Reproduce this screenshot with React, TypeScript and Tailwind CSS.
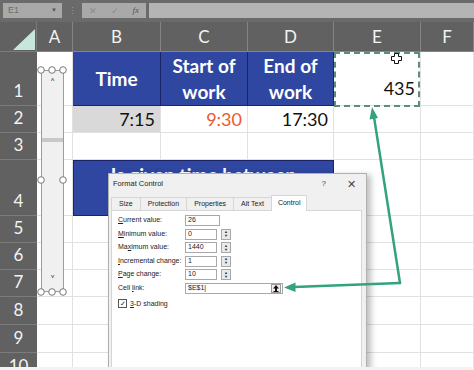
import React from "react";

const cols = ["A", "B", "C", "D", "E", "F"];
const blank = "bg-white border-r border-b border-[#e1e1e1]";
const blue =
  "bg-[#2f47a1] border-r border-b border-[#1a2466] text-white font-bold text-[19px] leading-[26px] flex items-center justify-center text-center";

const RowHead = ({ n }: { n: number }) => (
  <div className="bg-[#616161] border-b border-[#7c7c7c] flex items-end justify-center pb-[4px] text-[17px] leading-[20px] text-[#f3f3f3]">
    {n}
  </div>
);

const Spinner = () => (
  <div className="w-[10px] h-[11px] border border-[#a8a8a8] bg-[#e9e9e9] flex flex-col items-center justify-center text-[4px] leading-[4px] text-[#333]">
    <span>▲</span>
    <span>▼</span>
  </div>
);

const fields = [
  { label: <><span className="underline">C</span>urrent value:</>, value: "26", spin: false },
  { label: <><span className="underline">M</span>inimum value:</>, value: "0", spin: true },
  { label: <>Ma<span className="underline">x</span>imum value:</>, value: "1440", spin: true },
  { label: <><span className="underline">I</span>ncremental change:</>, value: "1", spin: true },
  { label: <><span className="underline">P</span>age change:</>, value: "10", spin: true },
];

const FormatControl = () => (
  <div className="absolute left-[108px] top-[173px] w-[259px] h-[200px] bg-[#f0f0f0] border border-[#b0b0b0] shadow-[4px_2px_6px_rgba(0,0,0,0.25)] font-['Liberation_Sans',sans-serif] text-[#222]">
    <div className="h-[20px] flex items-center pl-[4px] pr-[10px] text-[7.5px]">
      <span className="flex-1">Format Control</span>
      <span className="text-[8px] text-[#444] mr-[21px]">?</span>
      <span className="text-[11px] leading-none text-[#444] font-light">✕</span>
    </div>
    <div className="flex items-end h-[16px] pl-[2px] text-[7px]">
      {["Size", "Protection", "Properties", "Alt Text"].map((t) => (
        <div
          key={t}
          className="h-[13px] px-[7px] flex items-center border border-b-0 border-[#d6d6d6] -mr-px bg-[#f0f0f0]"
        >
          {t}
        </div>
      ))}
      <div className="h-[16px] px-[6px] flex items-center border border-b-0 border-[#d6d6d6] bg-white relative top-px">
        Control
      </div>
    </div>
    <div className="ml-[2px] mr-[4px] h-[170px] bg-white border border-[#d6d6d6] pl-[6px] pt-[4px] text-[7px]">
      <div className="flex flex-col gap-[2.5px]">
        {fields.map((f, i) => (
          <div key={i} className="flex items-center h-[11px]">
            <div className="w-[67px]">{f.label}</div>
            <div
              className={`${f.spin ? "w-[32px]" : "w-[35px]"} h-[11px] border border-[#a8a8a8] bg-white pl-[2px] flex items-center`}
            >
              {f.value}
            </div>
            {f.spin && (
              <div className="ml-[4px]">
                <Spinner />
              </div>
            )}
          </div>
        ))}
        <div className="flex items-center h-[11px]">
          <div className="w-[67px]">
            Cell <span className="underline">l</span>ink:
          </div>
          <div className="w-[98px] h-[11px] border border-[#a8a8a8] bg-white pl-[2px] flex items-center">
            <span className="flex-1">$E$1|</span>
            <div className="w-[10px] h-[9px] border border-[#9a9a9a] bg-[#eeeeee] flex items-center justify-center mr-px">
              <svg width="6" height="7" viewBox="0 0 6 7">
                <path d="M3 0L6 3.5H4V6H2V3.5H0Z" fill="#111" />
                <rect x="0.5" y="6" width="5" height="1" fill="#111" />
              </svg>
            </div>
          </div>
        </div>
      </div>
      <div className="flex items-center mt-[5px] gap-[3px]">
        <div className="w-[9px] h-[9px] border border-[#555] flex items-center justify-center text-[7px] leading-none">
          ✓
        </div>
        <span>
          <span className="underline">3</span>-D shading
        </span>
      </div>
    </div>
  </div>
);

const ScrollControl = () => (
  <>
    <div className="absolute left-[41px] top-[70px] w-[23px] h-[222px] border border-[#9c9c9c] bg-[#f0f0f0] flex flex-col items-center">
      <span className="mt-[6px] text-[9px] leading-none text-[#444]">˄</span>
      <div className="mt-[52px] w-full h-[4px] bg-[#c8c8c8]" />
      <div className="flex-1" />
      <span className="mb-[8px] text-[9px] leading-none text-[#444]">˅</span>
    </div>
    <svg className="absolute left-0 top-0 pointer-events-none" width="474" height="370">
      {[
        [41, 70], [52, 70], [63, 70],
        [41, 180], [63, 180],
        [41, 292], [52, 292], [63, 292],
      ].map(([x, y], i) => (
        <circle key={i} cx={x} cy={y} r="3.3" fill="white" stroke="#777" strokeWidth="1" />
      ))}
    </svg>
  </>
);

export default function App() {
  const rows = [1, 2, 3, 4, 5, 6, 7, 8, 9, 10];
  return (
    <div className="relative w-[474px] h-[370px] overflow-hidden bg-white font-['Lato',sans-serif]">
      {/* formula bar */}
      <div className="h-[22px] bg-[#6a6a6a] flex items-start pt-[3px] pl-[3px]">
        <div className="w-[59px] h-[15px] bg-[#a9a9a9] flex items-center px-[5px] text-[9px] text-[#6f6f6f] font-['Liberation_Sans',sans-serif]">
          <span className="flex-1">E1</span>
          <span className="text-[6px] text-[#555]">▼</span>
        </div>
        <div className="w-[20px] h-[15px] flex items-center justify-center text-[9px] text-[#9a9a9a]">⋮</div>
        <div className="w-[64px] h-[15px] bg-[#a9a9a9] flex items-center justify-around text-[9px] text-[#8a8a8a]">
          <span>✕</span>
          <span>✓</span>
          <span className="italic font-['Liberation_Serif',serif] text-[#555]">fx</span>
        </div>
        <div className="flex-1 h-[15px] ml-[3px] bg-[#b4b4b4]" />
      </div>

      {/* sheet */}
      <div className="grid grid-cols-[37px_36px_88px_87px_86px_87px_53px] grid-rows-[30px_54px_27px_27px_56px_27px_27px_27px_28px_28px_28px]">
        <div className="bg-[#616161] border-b border-r border-[#7c7c7c] relative">
          <svg className="absolute left-[13px] top-[7px]" width="22" height="21">
            <polygon points="22,0 22,21 0,21" fill="#c7e7dd" />
          </svg>
        </div>
        {cols.map((c) => (
          <div
            key={c}
            className="bg-[#616161] border-r border-b border-[#858585] flex items-center justify-center text-[17px] text-[#f3f3f3]"
          >
            {c}
          </div>
        ))}

        {rows.map((n) => {
          if (n === 1)
            return (
              <React.Fragment key={n}>
                <RowHead n={n} />
                <div className={blank} />
                <div className={blue}>Time</div>
                <div className={blue}>
                  Start of
                  <br />
                  work
                </div>
                <div className={blue}>
                  End of
                  <br />
                  work
                </div>
                <div className={`${blank} flex items-end justify-end pr-[5px] pb-[3px] text-[18px] text-[#111]`}>
                  435
                </div>
                <div className={blank} />
              </React.Fragment>
            );
          if (n === 2)
            return (
              <React.Fragment key={n}>
                <RowHead n={n} />
                <div className={blank} />
                <div className="bg-[#d9d9d9] border-r border-b border-[#e1e1e1] flex items-center justify-end pr-[5px] text-[18px] text-[#111]">
                  7:15
                </div>
                <div className={`${blank} flex items-center justify-end pr-[5px] text-[18px] text-[#ea5a2c]`}>
                  9:30
                </div>
                <div className={`${blank} flex items-center justify-end pr-[5px] text-[18px] text-[#111]`}>
                  17:30
                </div>
                <div className={blank} />
                <div className={blank} />
              </React.Fragment>
            );
          if (n === 4)
            return (
              <React.Fragment key={n}>
                <RowHead n={n} />
                <div className={blank} />
                <div className="col-span-3 bg-[#2f47a1] border border-[#1a2466] text-white font-bold text-[19px] leading-[26px] flex items-start justify-center pt-[1px]">
                  Is given time between
                </div>
                <div className={blank} />
                <div className={blank} />
              </React.Fragment>
            );
          return (
            <React.Fragment key={n}>
              <RowHead n={n} />
              {cols.map((c) => (
                <div key={c} className={blank} />
              ))}
            </React.Fragment>
          );
        })}
      </div>

      {/* copied cell marquee */}
      <div className="absolute left-[334px] top-[52px] w-[86px] h-[55px] border-2 border-dashed border-[#5b8f7b]" />
      <svg className="absolute left-[391px] top-[53px]" width="11" height="11">
        <path
          d="M3.5 0.5h4v3h3v4h-3v3h-4v-3h-3v-4h3z"
          fill="white"
          stroke="#111"
          strokeWidth="1"
        />
      </svg>

      <ScrollControl />
      <FormatControl />

      {/* arrows */}
      <svg className="absolute left-0 top-0 pointer-events-none" width="474" height="370">
        <g stroke="#33a27f" strokeWidth="2.5" fill="none" strokeLinecap="round">
          <line x1="400" y1="283" x2="374" y2="117" />
          <line x1="400" y1="283" x2="294" y2="287" />
        </g>
        <polygon points="372,107 378,118 369.5,119.5" fill="#33a27f" />
        <polygon points="284,287.5 295.5,282.5 295.5,292" fill="#33a27f" />
      </svg>

      <div className="absolute left-0 right-0 bottom-0 h-[3px] bg-[#f2f2f2]" />
    </div>
  );
}
